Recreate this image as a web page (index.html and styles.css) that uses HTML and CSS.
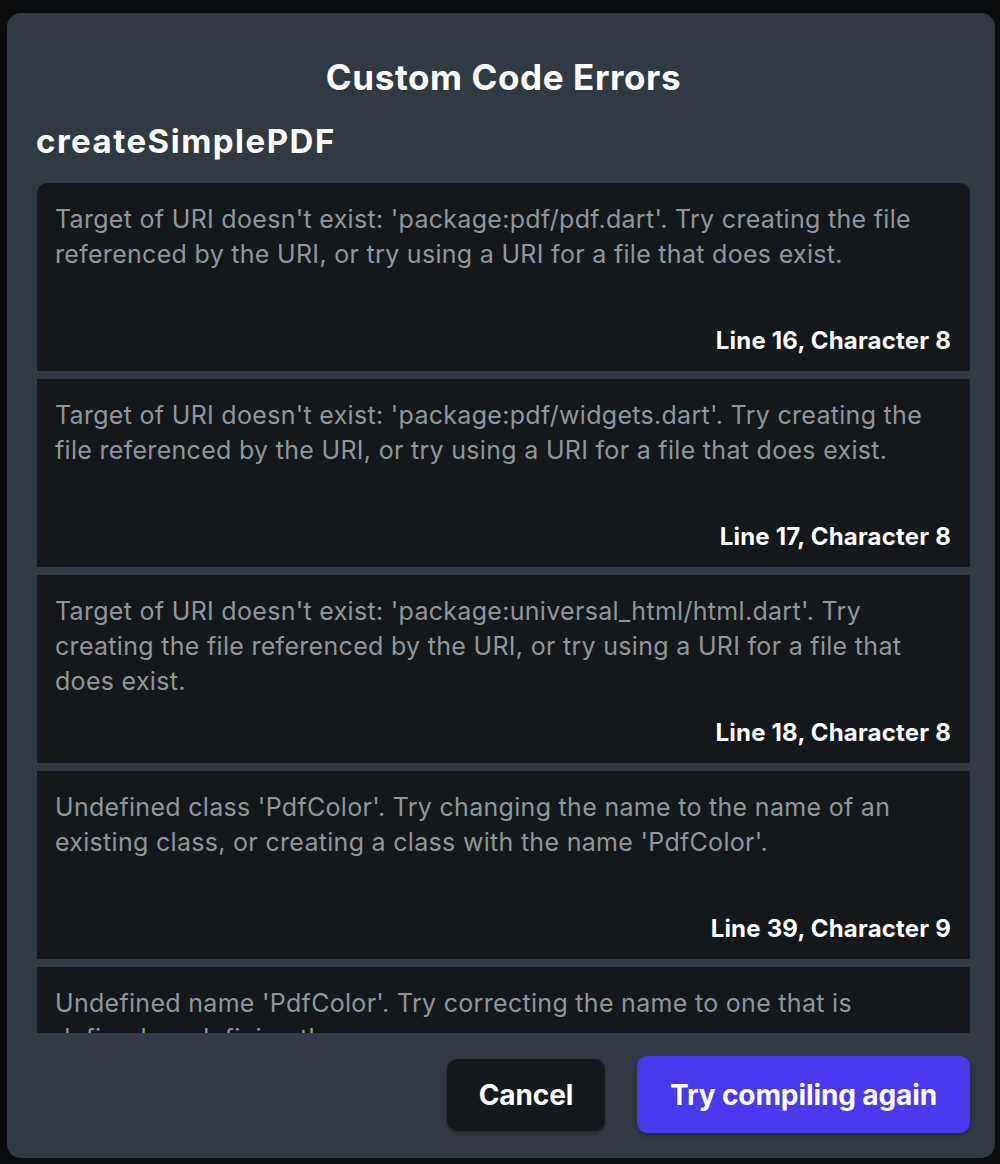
FILE: index.html
```html
<!DOCTYPE html>
<html>
<head>
<meta charset="utf-8">
<link rel="stylesheet" href="styles.css">
</head>
<body>
<div class="backdrop">
  <div class="modal">
    <h1 class="title">Custom Code Errors</h1>
    <h2 class="fn">createSimplePDF</h2>
    <div class="list">
      <div class="card">
        <p class="msg">Target of URI doesn't exist: 'package:pdf/pdf.dart'. Try creating the file referenced by the URI, or try using a URI for a file that does exist.</p>
        <p class="loc">Line 16, Character 8</p>
      </div>
      <div class="card">
        <p class="msg">Target of URI doesn't exist: 'package:pdf/widgets.dart'. Try creating the file referenced by the URI, or try using a URI for a file that does exist.</p>
        <p class="loc">Line 17, Character 8</p>
      </div>
      <div class="card">
        <p class="msg">Target of URI doesn't exist: 'package:universal_html/html.dart'. Try creating the file referenced by the URI, or try using a URI for a file that does exist.</p>
        <p class="loc">Line 18, Character 8</p>
      </div>
      <div class="card">
        <p class="msg">Undefined class 'PdfColor'. Try changing the name to the name of an existing class, or creating a class with the name 'PdfColor'.</p>
        <p class="loc">Line 39, Character 9</p>
      </div>
      <div class="card">
        <p class="msg">Undefined name 'PdfColor'. Try correcting the name to one that is defined, or defining the name.</p>
        <p class="loc">Line 39, Character 20</p>
      </div>
    </div>
    <div class="actions">
      <button class="btn btn-cancel">Cancel</button>
      <button class="btn btn-primary">Try compiling again</button>
    </div>
  </div>
</div>
</body>
</html>
```

FILE: styles.css
```css
* { box-sizing: border-box; }
html, body {
  margin: 0;
  padding: 0;
  background: #0b0c0d;
  font-family: "Inter", "Liberation Sans", sans-serif;
}
.backdrop {
  width: 1000px;
  height: 1164px;
  padding: 13px 5px 6px 7px;
}
.modal {
  width: 988px;
  height: 1145px;
  background: #313a42;
  border-radius: 14px;
  padding: 0 25px 0 30px;
  display: flex;
  flex-direction: column;
}
.title {
  margin: 42px 0 0 0;
  height: 44px;
  line-height: 44px;
  font-size: 35px;
  font-weight: 700;
  color: #ffffff;
  text-align: center;
  letter-spacing: 0.6px;
}
.fn {
  margin: 22px 0 0 -1px;
  height: 40px;
  line-height: 40px;
  font-size: 33px;
  font-weight: 700;
  color: #ffffff;
  letter-spacing: 1.5px;
}
.list {
  margin-top: 22px;
  height: 850px;
  overflow: hidden;
  border-radius: 10px 10px 0 0;
  display: flex;
  flex-direction: column;
  gap: 8px;
  flex: none;
}
.card {
  flex: none;
  height: 188px;
  background: #14181b;
  padding: 19px 19px 16px 18px;
  display: flex;
  flex-direction: column;
  justify-content: space-between;
}
.msg {
  margin: 0;
  font-size: 25px;
  line-height: 35px;
  color: #8f979d;
  letter-spacing: 0.3px;
}
.loc {
  margin: 0;
  font-size: 24px;
  line-height: 28px;
  font-weight: 700;
  color: #ffffff;
  text-align: right;
  letter-spacing: 0.2px;
}
.actions {
  margin-top: 23px;
  display: flex;
  justify-content: flex-end;
  align-items: center;
  gap: 32px;
}
.btn {
  border: none;
  font-family: inherit;
  font-weight: 700;
  font-size: 28px;
  color: #ffffff;
  border-radius: 10px;
  letter-spacing: -0.1px;
  padding: 0;
}
.btn-cancel {
  width: 158px;
  height: 72px;
  background: #15191c;
  box-shadow: 0 2px 4px rgba(0,0,0,0.3);
}
.btn-primary {
  width: 333px;
  height: 77px;
  background: #4b39ef;
  box-shadow: 0 2px 4px rgba(0,0,0,0.3);
}
```
